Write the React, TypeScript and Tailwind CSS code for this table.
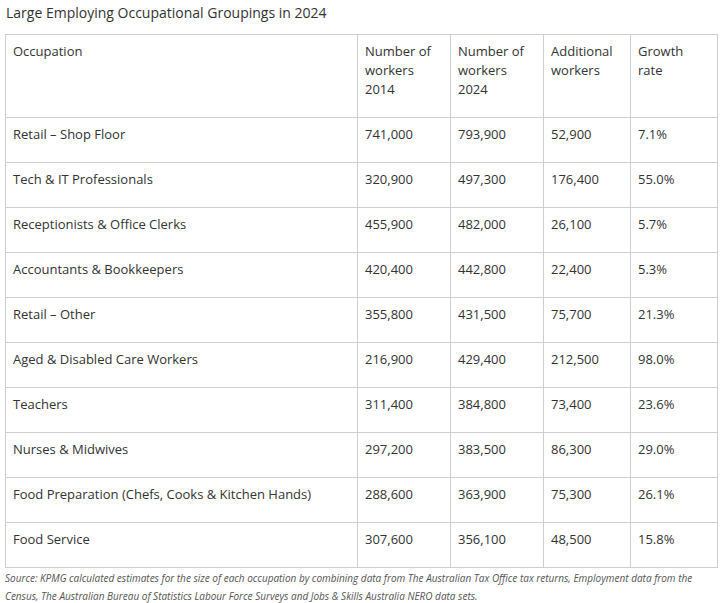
import React from 'react';

const ROWS = [
  ['Retail – Shop Floor', '741,000', '793,900', '52,900', '7.1%'],
  ['Tech & IT Professionals', '320,900', '497,300', '176,400', '55.0%'],
  ['Receptionists & Office Clerks', '455,900', '482,000', '26,100', '5.7%'],
  ['Accountants & Bookkeepers', '420,400', '442,800', '22,400', '5.3%'],
  ['Retail – Other', '355,800', '431,500', '75,700', '21.3%'],
  ['Aged & Disabled Care Workers', '216,900', '429,400', '212,500', '98.0%'],
  ['Teachers', '311,400', '384,800', '73,400', '23.6%'],
  ['Nurses & Midwives', '297,200', '383,500', '86,300', '29.0%'],
  ['Food Preparation (Chefs, Cooks & Kitchen Hands)', '288,600', '363,900', '75,300', '26.1%'],
  ['Food Service', '307,600', '356,100', '48,500', '15.8%'],
];

const cell = 'border border-[#cfcfcf] px-[7px] pt-[7px] align-top text-left font-normal';

export default function App() {
  return (
    <div className="w-[726px] h-[603px] bg-white text-[#333] font-['Open_Sans',sans-serif] overflow-hidden">
      <h2 className="pl-[6px] pt-[3px] text-[14px] leading-[20px] font-normal">
        Large Employing Occupational Groupings in 2024
      </h2>
      <table className="ml-[5px] mt-[11px] w-[712px] table-fixed border-collapse text-[13px] leading-[19px]">
        <colgroup>
          <col className="w-[352px]" />
          <col className="w-[93px]" />
          <col className="w-[93px]" />
          <col className="w-[87px]" />
          <col className="w-[87px]" />
        </colgroup>
        <thead>
          <tr className="h-[83px]">
            <th className={cell}>Occupation</th>
            <th className={cell}>Number of workers 2014</th>
            <th className={cell}>Number of workers 2024</th>
            <th className={cell}>Additional workers</th>
            <th className={cell}>Growth rate</th>
          </tr>
        </thead>
        <tbody>
          {ROWS.map((r) => (
            <tr key={r[0]} className="h-[45px]">
              {r.map((v, i) => (
                <td key={i} className={cell}>{v}</td>
              ))}
            </tr>
          ))}
        </tbody>
      </table>
      <p className="pl-[5px] pt-[1px] text-[10px] leading-[18px] italic text-[#555]">
        Source: KPMG calculated estimates for the size of each occupation by combining data from The Australian Tax Office tax returns, Employment data from the Census, The Australian Bureau of Statistics Labour Force Surveys and Jobs &amp; Skills Australia NERO data sets.
      </p>
    </div>
  );
}
